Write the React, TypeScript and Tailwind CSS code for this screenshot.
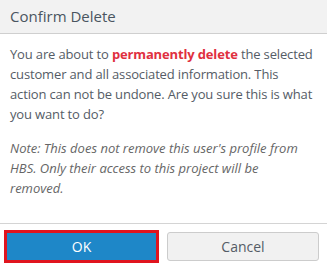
import React from 'react';

const App: React.FC = () => {
  return (
    <div className="w-[327px] h-[268px] bg-white flex flex-col overflow-hidden" style={{ fontFamily: '"Open Sans", sans-serif' }}>
      {/* Header */}
      <div className="h-[34px] bg-[#f2f2f2] border-b border-[#cfcfcf] flex items-center px-[10px]">
        <h3 className="text-[15px] text-[#4a5560] leading-none">Confirm Delete</h3>
      </div>

      {/* Body */}
      <div className="flex-1 px-[10px] pt-[10px] text-[13px] leading-[20px] text-[#555c66]">
        <p className="tracking-[-0.15px]">
          You are about to <span className="font-bold text-[#e0303f]">permanently delete</span> the selected
          customer and all associated information. This action can not be undone. Are you sure this is what
          you want to do?
        </p>
        <p className="italic mt-[14px] pr-[14px] text-[#666]">
          Note: This does not remove this user's profile from HBS. Only their access to this project will be
          removed.
        </p>
      </div>

      {/* Footer */}
      <div className="h-[45px] border-t border-[#d4d4d4] flex items-center gap-[8px] px-[4px]">
        <button className="w-[155px] h-[33px] bg-[#1e87c8] border-[3px] border-[#e0141e] text-white text-[14px]">
          OK
        </button>
        <button className="w-[152px] h-[29px] bg-[#f1f1f1] border border-[#cccccc] rounded-[3px] text-[#555c66] text-[14px]">
          Cancel
        </button>
      </div>
    </div>
  );
};

export default App;
